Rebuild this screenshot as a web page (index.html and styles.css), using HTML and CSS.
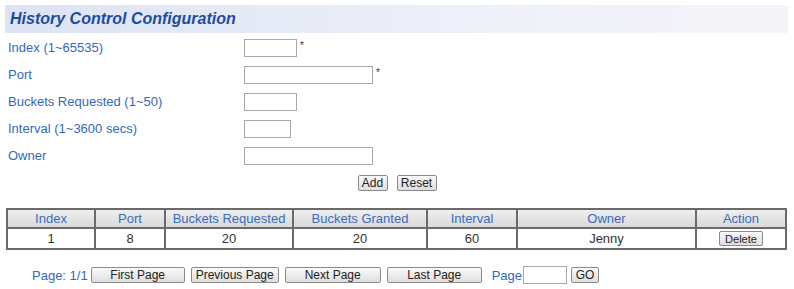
FILE: index.html
```html
<!DOCTYPE html>
<html lang="en">

<head>
    <meta charset="UTF-8">
    <title>History Control Configuration</title>
    <link rel="stylesheet" href="styles.css">
</head>

<body>
    <div class="title-bar">History Control Configuration</div>

    <div class="form">
        <div class="row">
            <label>Index (1~65535)</label>
            <input type="text" class="w-sm"><span class="req">*</span>
        </div>
        <div class="row">
            <label>Port</label>
            <input type="text" class="w-lg"><span class="req">*</span>
        </div>
        <div class="row">
            <label>Buckets Requested (1~50)</label>
            <input type="text" class="w-sm">
        </div>
        <div class="row">
            <label>Interval (1~3600 secs)</label>
            <input type="text" class="w-xs">
        </div>
        <div class="row">
            <label>Owner</label>
            <input type="text" class="w-lg">
        </div>
    </div>

    <div class="actions">
        <button class="btn btn-add">Add</button>
        <button class="btn btn-reset">Reset</button>
    </div>

    <table class="list">
        <thead>
            <tr>
                <th style="width: 86px">Index</th>
                <th style="width: 68px">Port</th>
                <th style="width: 126px">Buckets Requested</th>
                <th style="width: 132px">Buckets Granted</th>
                <th style="width: 88px">Interval</th>
                <th style="width: 177px">Owner</th>
                <th>Action</th>
            </tr>
        </thead>
        <tbody>
            <tr>
                <td>1</td>
                <td>8</td>
                <td>20</td>
                <td>20</td>
                <td>60</td>
                <td>Jenny</td>
                <td><button class="btn btn-del">Delete</button></td>
            </tr>
        </tbody>
    </table>

    <div class="pager">
        <span class="page-info">Page: 1/1</span>
        <button class="btn pg" style="width: 94px">First Page</button>
        <button class="btn pg" style="width: 88px">Previous Page</button>
        <button class="btn pg" style="width: 96px">Next Page</button>
        <button class="btn pg" style="width: 95px">Last Page</button>
        <span class="page-go">Page</span>
        <input type="text" class="page-input">
        <button class="btn btn-go">GO</button>
    </div>
</body>

</html>
```

FILE: styles.css
```css
body {
    margin: 0;
    font-family: "Liberation Sans", Arial, sans-serif;
    font-size: 13px;
    color: #333;
    background: #fff;
}

.title-bar {
    margin: 5px 6px 0 5px;
    height: 28px;
    line-height: 28px;
    padding-left: 5px;
    font-size: 16px;
    font-weight: bold;
    font-style: italic;
    color: #1d4c9e;
    background: linear-gradient(to right, #dce3f3, #eef0f9 60%, #f5f5f8);
}

.form {
    padding-top: 1px;
}

.row {
    display: flex;
    align-items: center;
    height: 27px;
}

.row label {
    width: 236px;
    padding-left: 8px;
    color: #3468bd;
}

.row input,
.page-input {
    box-sizing: border-box;
    height: 18px;
    border: 1px solid #a8a8a8;
    margin: 0;
    padding: 0 2px;
}

.w-xs {
    width: 47px;
}

.w-sm {
    width: 53px;
}

.w-lg {
    width: 129px;
}

.req {
    align-self: flex-start;
    margin-top: 6px;
    margin-left: 3px;
    font-size: 10px;
    color: #333;
}

.btn {
    box-sizing: border-box;
    height: 16px;
    padding: 0;
    font-family: "Liberation Sans", Arial, sans-serif;
    font-size: 12px;
    line-height: 14px;
    color: #222;
    border: 1px solid #8a8a8a;
    border-radius: 2px;
    background: linear-gradient(#fafafa, #dedede);
}

.actions {
    display: flex;
    justify-content: center;
    gap: 9px;
    margin-top: 6px;
}

.btn-add {
    width: 30px;
}

.btn-reset {
    width: 40px;
}

.list {
    margin: 17px 0 0 6px;
    width: 781px;
    border-collapse: collapse;
    table-layout: fixed;
}

.list th,
.list td {
    border: 2px solid #6a6a6a;
    text-align: center;
    padding: 0;
}

.list th {
    height: 17px;
    font-weight: normal;
    color: #3a6cbd;
    background: linear-gradient(#efefef, #d9d9d9);
}

.list td {
    height: 19px;
    color: #333;
}

.btn-del {
    width: 44px;
    height: 15px;
    font-size: 11px;
}

.pager {
    display: flex;
    align-items: center;
    margin: 16px 0 0 32px;
}

.page-info {
    color: #3468bd;
    margin-right: 3px;
}

.pg {
    margin-right: 6px;
}

.page-go {
    color: #3468bd;
    margin-left: 4px;
}

.page-input {
    width: 44px;
    margin-left: 1px;
}

.btn-go {
    width: 28px;
    margin-left: 4px;
}
```
